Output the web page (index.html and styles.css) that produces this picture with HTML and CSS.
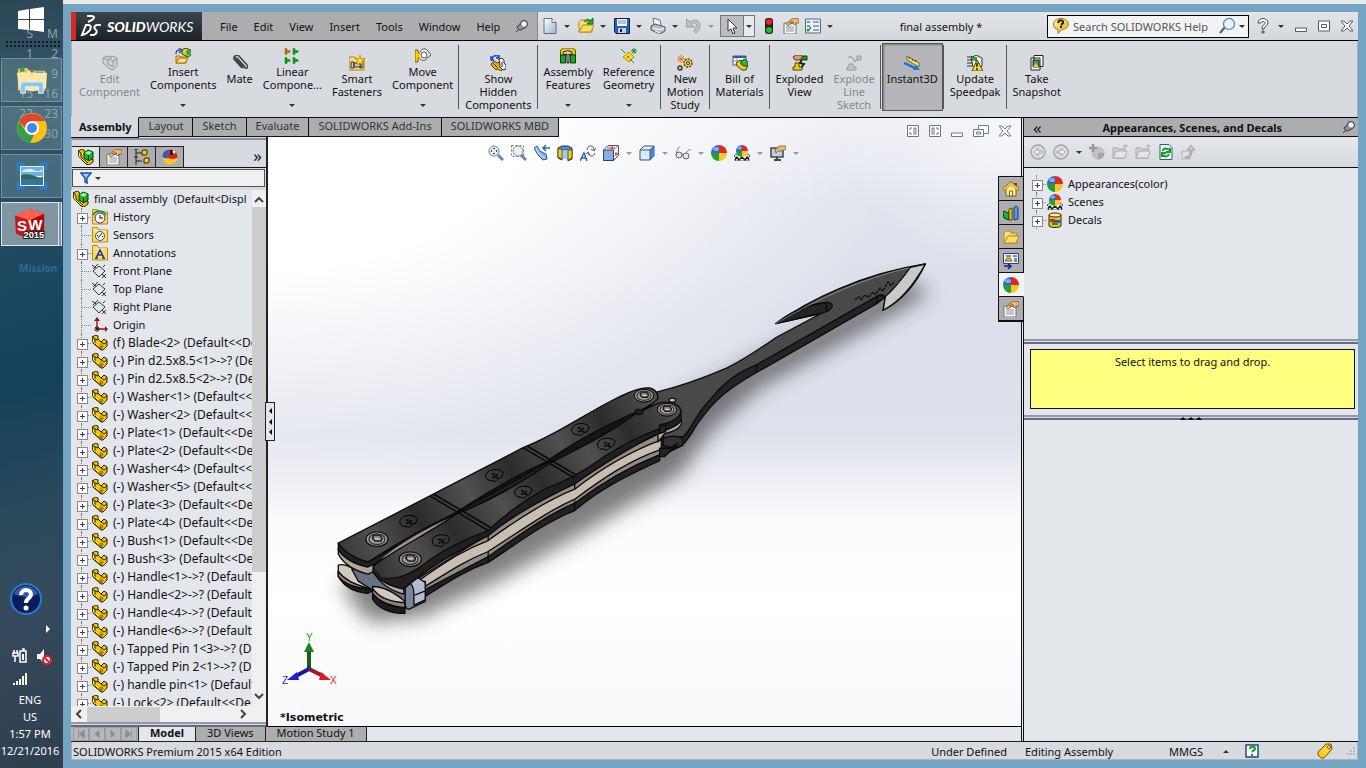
FILE: index.html
```html
<!DOCTYPE html>
<html lang="en">
<head>
    <meta charset="UTF-8">
    <meta name="viewport" content="width=device-width, initial-scale=1.0">
    <title>SOLIDWORKS - final assembly</title>
    <link rel="stylesheet" href="styles.css">
</head>
<body>
    <!-- shared icons -->
    <svg class="defs" aria-hidden="true">
        <defs>
            <linearGradient id="gold" x1="0" y1="0" x2="1" y2="1"><stop offset="0" stop-color="#fff3a8"/><stop offset="1" stop-color="#e8a820"/></linearGradient>
            <linearGradient id="steel" x1="0" y1="0" x2="1" y2="1"><stop offset="0" stop-color="#fff"/><stop offset="1" stop-color="#9fb4cc"/></linearGradient>
        </defs>
        <symbol id="part" viewBox="0 0 16 16"><path d="M0 2L4 0l2 1v3l3 3 3-3 3 2v5l-4 4-2 0-8-7z" fill="#f4c800" stroke="#221c00"/><path d="M0 2l3 2v5l7 5M9 7l3 2 3-2M6 5l-3-1" fill="none" stroke="#221c00"/><path d="M9 9l3 2-2 3-3-3z" fill="#b08400"/><path d="M1.500 4v3l6 5" fill="none" stroke="#ffef50"/></symbol>
        <symbol id="asm" viewBox="0 0 16 16"><path d="M0 2l4-2 2 1 1 6 4 3 4 0v3l-4 3-3-1-7-7z" fill="#f4c800" stroke="#221c00"/><path d="M0 2l3 2v4l7 6" fill="none" stroke="#221c00"/><path d="M1.500 4v4l6 5" fill="none" stroke="#ffef50"/><path d="M6 4l4-3 5 2v6l-4 3-5-3z" fill="#18b02c" stroke="#063a0c"/><path d="M7 4l3-2 4 1-3 3z" fill="#a8f4a8"/><path d="M10.500 6v5" stroke="#063a0c"/></symbol>
        <symbol id="asm-off" viewBox="0 0 16 16"><path d="M1 3l3-2 2 1 4-1 5 2v8l-4 4-3-1-7-6z" fill="#d0d2d5" stroke="#94969a"/><path d="M1 3l5 2v4l5 3V6l4-2M6 5l4-3M11 6L7 4" fill="none" stroke="#94969a"/></symbol>
        <symbol id="folder" viewBox="0 0 16 16"><path d="M1 14V4l2-2h4l1 2h6v10z" fill="url(#gold)" stroke="#b98a10"/><path d="M1 14l4-7h11l-3 7z" fill="#ffdd6c" stroke="#b98a10"/></symbol>
        <symbol id="fold-box" viewBox="0 0 16 16"><path d="M0.500 2V.5h5L7 3h8.500v12H.5z" fill="#ffdc60" stroke="#b98a10"/><path d="M1 4h13" stroke="#fff4b8"/></symbol>
        <symbol id="history" viewBox="0 0 16 16"><use href="#fold-box"/><circle cx="8" cy="9" r="5" fill="#fff" stroke="#2233aa"/><path d="M8 6v3h3" fill="none" stroke="#d02020" stroke-width="1.4"/><path d="M1 6c3-5 10-5 13 0" fill="none" stroke="#18992a" stroke-width="2"/></symbol>
        <symbol id="sensor" viewBox="0 0 16 16"><use href="#fold-box"/><circle cx="8" cy="9" r="4.500" fill="#eef4ff" stroke="#445577"/><path d="M6 11l4-5M5 8l1 1M11 10l-1-1" stroke="#223"/></symbol>
        <symbol id="annot" viewBox="0 0 16 16"><use href="#fold-box"/><path d="M4 13L8 5l4 8M5 10h6M3 13h3M10 13h3" fill="none" stroke="#1733b8" stroke-width="1.500"/></symbol>
        <symbol id="plane" viewBox="0 0 16 16"><path d="M7 3l6 5-6 6-6-6zM0 2l4 3M1 6l5-5M10 11l4 4M11 4l2-2M10 15l4-4" fill="none" stroke="#333"/></symbol>
        <symbol id="origin" viewBox="0 0 16 16"><path d="M5 1v11h9" fill="none" stroke="#a01010" stroke-width="1.400"/><path d="M5 0L2 4h6zM16 12l-3-3v6z" fill="#a01010"/><path d="M3 10l4 4M7 10l-4 4M5 9v6M2 12h6" stroke="#222"/></symbol>
        <symbol id="ball" viewBox="0 0 16 16"><path d="M8 8V0a8 8 0 0 0-8 8z" fill="#2868d8"/><path d="M8 8V0a8 8 0 0 1 8 8z" fill="#e02828"/><path d="M8 8H0a8 8 0 0 0 8 8z" fill="#20a030"/><path d="M8 8h8a8 8 0 0 1-8 8z" fill="#f8c828"/><ellipse cx="5" cy="4" rx="3" ry="2" fill="#fff" opacity=".45"/></symbol>
        <symbol id="redball" viewBox="0 0 16 16"><circle cx="8" cy="8" r="7.500" fill="#f4c828"/><path d="M.5 8Q0 1 8 .5 5 5 6 9 3 10 .5 8z" fill="#2858c8"/><path d="M8 .5q8 1 7.500 8Q12 11 6 9 5 4 8 .5z" fill="#d82020"/><path d="M8 1h3v5H8z" fill="#30141c"/><path d="M11 2l2 2" stroke="#fff" stroke-width="2"/></symbol>
        <symbol id="scene" viewBox="0 0 16 16"><path d="M0 11l3-2h10l3 2-2 2 1 3H1l1-3z" fill="#fff" stroke="#555"/><path d="M1 15l2-3 2 3 3-3 3 3 2-3 2 3" fill="none" stroke="#222" stroke-width="1.500"/><svg x="2" width="12" height="12" viewBox="0 0 16 16"><use href="#ball"/></svg></symbol>
        <symbol id="decal" viewBox="0 0 16 16"><path d="M2 3v11c2 2 10 2 12 0V3z" fill="#f0c020" stroke="#332600"/><ellipse cx="8" cy="3" rx="6" ry="2" fill="#fff0a0" stroke="#332600"/><path d="M3 7h5v3H3z" fill="#e02020"/><path d="M8 8h5v3H8z" fill="#2050e0"/><path d="M5 10h6v3H5z" fill="#20a030"/></symbol>
        <symbol id="props" viewBox="0 0 16 16"><path d="M1 5h12v11H1z" fill="#f6f7f8" stroke="#70757c"/><path d="M3 9h8M3 11h8M3 13h8" stroke="#8995a5"/><path d="M3 6l2 2 4-3 3 2 1-2h3V1l-6-1-5 4z" fill="#e8b77c" stroke="#7a4a1c" stroke-width=".7"/><path d="M6 4l3 2M8 3l3 2" stroke="#7a4a1c"/></symbol>
        <symbol id="config" viewBox="0 0 16 16"><path d="M2 0v16M2 4h6M2 12h6M0 0h4M0 8h4" fill="none" stroke="#222"/><path d="M9 1h4v4l-1 1H8V2zM11 9h4v4l-1 1h-4v-4z" fill="#f6cc10" stroke="#332600"/></symbol>
        <symbol id="funnel" viewBox="0 0 12 12"><path d="M1 1h10L7 6v5l-2-1V6z" fill="#9cd4ff" stroke="#1552b8" stroke-width="1.500"/></symbol>
        <symbol id="magnify" viewBox="0 0 16 16"><path d="M10 10l5 5" stroke="#5c8cc0" stroke-width="3"/><circle cx="6" cy="6" r="5" fill="#e6f1fa" stroke="#777c84"/><path d="M6 3v1M6 8v1M3 6h1M8 6h1" stroke="#444" stroke-width="2"/></symbol>
        <symbol id="magarea" viewBox="0 0 16 16"><path d="M10 10l5 5" stroke="#5c8cc0" stroke-width="3"/><circle cx="7" cy="6" r="5" fill="#e6f1fa" stroke="#8a9098"/><path d="M.5.500h12v11H.5z" fill="none" stroke="#777" stroke-dasharray="2 2"/></symbol>
        <symbol id="prev" viewBox="0 0 16 16"><path d="M0 3l3-2 3 5 6 3 1 5-4 1-5-5z" fill="#7ab4e8" stroke="#2c5f9c"/><path d="M2 3l3 6 6 4" fill="none" stroke="#dff0ff"/><path d="M16 3h-6M12 0L9 3l3 3" fill="none" stroke="#2868b8" stroke-width="1.500"/></symbol>
        <symbol id="section" viewBox="0 0 16 16"><path d="M1 3l4-2h6l4 2v11l-4 2V5H5v10l-4-2z" fill="#4b8fe0" stroke="#234"/><path d="M5 5h6v9H5z" fill="#9cc8f4"/><path d="M1 4h4v10l-4-2zM11 5h4v8l-4 2z" fill="#f4cf30" stroke="#765800"/></symbol>
        <symbol id="textrot" viewBox="0 0 16 16"><path d="M0 16l4-8 3 8M2 13h4" fill="none" stroke="#2b63b8" stroke-width="1.500"/><path d="M7 5c1-6 7-5 7 0M16 3l-2 3-3-2M15 8c-1 4-6 4-7 0M6 9l2-2 2 3" fill="none" stroke="#555"/></symbol>
        <symbol id="orient" viewBox="0 0 16 16"><path d="M5 .5h10.500v10l-5 5H.5V5z" fill="#fff" stroke="#555"/><path d="M.5 5h10v10.500H.5z" fill="#7fb2e8" stroke="#345"/><path d="M10.500 5l5-4.500M5 1v4" stroke="#888"/><path d="M6 3h6M9 1v4M13 7v4M12 9h3" stroke="#d02020"/></symbol>
        <symbol id="cube" viewBox="0 0 16 16"><path d="M1 5l4-4h10v10l-4 4H1z" fill="#dcecff" stroke="#456"/><path d="M11 5l4-4v10l-4 4z" fill="#4b87d8"/><path d="M1 5h10v10M11 5l4-4" fill="none" stroke="#456"/></symbol>
        <symbol id="glasses" viewBox="0 0 16 16"><path d="M1 10c1-5 2-8 4-8M11 8c2-3 4-4 5-3M7 9h1" fill="none" stroke="#777"/><circle cx="4" cy="10" r="3" fill="#d6e8f8" stroke="#666"/><circle cx="11" cy="11" r="3" fill="#d6e8f8" stroke="#666"/></symbol>
        <symbol id="monitor" viewBox="0 0 16 16"><path d="M1 3h12v9H1z" fill="#bcd0e4" stroke="#444" stroke-width="1.500"/><path d="M4 15h7M7 12v3" stroke="#444" stroke-width="2"/><path d="M5 5l4-4h7v3l-4 2-4 0-2 2z" fill="#e8b77c" stroke="#7a4a1c" stroke-width=".7"/></symbol>
        <symbol id="insert" viewBox="0 0 16 16"><path d="M1 6c0-4 2-4 4-4M4 0l3 2-3 3" fill="none" stroke="#1840c0" stroke-width="1.300"/><path d="M1 15V8h4l1 1h5v6z" fill="#ffc840" stroke="#a87000"/><path d="M1 15l3-5h9l-3 5z" fill="#ffe184" stroke="#a87000"/><path d="M7 2l3-2 6 2v5l-3 2-6-3z" fill="#e8d020" stroke="#333"/><path d="M11 3l4-2v5l-3 2z" fill="#20b030"/></symbol>
        <symbol id="clip" viewBox="0 0 16 16"><path d="M3 2L13 13c3 1 3-1 2-3L7 1C5-1 1 1 2 4l8 9M5 3l8 9M3 4l7 8M6 7l5 6" fill="none" stroke="#444" stroke-width="1.500"/></symbol>
        <symbol id="pattern" viewBox="0 0 16 16"><path d="M1.500 1v5h1V4h3V3h-3V1z" fill="#f2c500" stroke="#a07000" stroke-width="1.500"/><path d="M9.500 1v5h1V4h3V3h-3V1zM1.500 10v5h1v-2h3v-1h-3v-2zM9.500 10v5h1v-2h3v-1h-3v-2z" fill="#22d022" stroke="#089018" stroke-width="1.500"/></symbol>
        <symbol id="smart" viewBox="0 0 16 16"><path d="M0 2h6l1 2h9v11H0z" fill="#ffdc80" stroke="#b97c10"/><path d="M2 7h3v6H2zM5 8h7v4H5zM11 6h3v7h-3z" fill="#ccc" stroke="#333"/><path d="M11 0l1 4 4 0-3 2 1 4-3-2-3 2 1-4-3-2h4z" fill="#ffe820" stroke="#c07800" stroke-width=".6"/></symbol>
        <symbol id="move" viewBox="0 0 16 16"><path d="M0 2h3v3h3v5H3v4H0z" fill="#ffd000" stroke="#806000"/><path d="M5 4c2-4 6-4 8-1l3 4-4 3c-1 3-5 3-7 1" fill="#eceef0" stroke="#555"/><circle cx="9" cy="7" r="3" fill="#fff" stroke="#555"/></symbol>
        <symbol id="showhide" viewBox="0 0 16 16"><path d="M2 4c1-4 5-4 7-2M9 0v3H6M1 1v4h3" fill="none" stroke="#1840c0" stroke-width="1.400"/><path d="M1 9l3-3 3 2 3-1 2 4 2 2-3 3-3-2-2 1-4-4z" fill="#e8b010" stroke="#5c4300"/><path d="M9 4l3-1 2 2v3l2 2v4l-3 1-3-3z" fill="#e5e8ec" stroke="#333"/><path d="M3 8l5 5M12 7v5" stroke="#333"/></symbol>
        <symbol id="asmfeat" viewBox="0 0 16 16"><path d="M.5 2l3-2h9l3 2v5H.5z" fill="#f2d000" stroke="#665400"/><path d="M.5 7h5v8h-5zM10.500 7h5v8h-5z" fill="#20a828" stroke="#064010"/><path d="M3 4q5-3 9 0v3l-3-1v9H7V6L4 7z" fill="#ccc" stroke="#222"/></symbol>
        <symbol id="refgeo" viewBox="0 0 16 16"><path d="M8 4l5 5-5 5-6-5z" fill="#ffd820" stroke="#b88800"/><path d="M0 1l4 4M9 11l4 4M13 0v6M10 3h6M11 1l4 4M15 1l-4 4" stroke="#18902a"/><circle cx="7" cy="9" r="1" fill="#a05000"/></symbol>
        <symbol id="motion" viewBox="0 0 16 16"><circle cx="11" cy="8" r="4" fill="#ffd24a" stroke="#6a4800" stroke-width="1.600" stroke-dasharray="2 1"/><circle cx="3" cy="13" r="2" fill="#ffd24a" stroke="#333" stroke-width="1.400"/><circle cx="11" cy="8" r="1.500" fill="#fff" stroke="#222"/><path d="M4 0v8M0 4h8M1 1l6 6M7 1L1 7" stroke="#f07010"/></symbol>
        <symbol id="bom" viewBox="0 0 16 16"><path d="M1 1h13v9H1z" fill="#fff" stroke="#3458a8"/><path d="M1 2h13" stroke="#3458a8" stroke-width="2"/><path d="M1 6h12M5 3v7" stroke="#7890b8"/><path d="M4 8l4-3 8 5-2 5-4 0-5-4z" fill="#f0c818" stroke="#553c00"/><path d="M9 6l4-2 3 3v4l-4 0-3-2z" fill="#28b838" stroke="#08500f"/></symbol>
        <symbol id="explode" viewBox="0 0 16 16"><path d="M10 4l-2 4 4 1-3 4" fill="none" stroke="#222" stroke-width="2"/><path d="M1 2l3-2h6v3L7 5H3z" fill="#d8a060" stroke="#5c3410"/><path d="M11 1h4v4h-4z" fill="#20a830" stroke="#063a0c"/><path d="M3 8h4v4h3v3H1v-3h2z" fill="#f4cc10" stroke="#554000"/></symbol>
        <symbol id="explode-off" viewBox="0 0 16 16"><path d="M2 3l3-2 4 6 3-3M11 1h4v4h-4zM3 9h4v3h3v3H1v-3h2z" fill="#c4c6c9" stroke="#97999d"/></symbol>
        <symbol id="instant" viewBox="0 0 16 16"><path d="M3 1l12 7v4L3 5z" fill="#f4e468" stroke="#75691c"/><path d="M5 4l1-2M8 6l1-2M11 7l1-2" stroke="#333"/><path d="M0 8l11 5" stroke="#1878d8" stroke-width="2.500"/><path d="M9 15l7 0-4-5z" fill="#1878d8"/></symbol>
        <symbol id="speedpak" viewBox="0 0 16 16"><path d="M4 3l5-3 6 3v8l-4 4-5-3z" fill="#eee" stroke="#333"/><path d="M0 2h7M0 5h6M0 8h6M0 11h5M4 1l9 8" stroke="#333"/><path d="M5 2h5v5L5 5z" fill="#20a838"/><path d="M10 5l6 11H5z" fill="#ffe020" stroke="#514500"/><path d="M10 8v4M10 13v2" stroke="#111" stroke-width="1.500"/></symbol>
        <symbol id="snapshot" viewBox="0 0 16 16"><path d="M5 .5h9v11H5zM2 3h9v12H2z" fill="#fff" stroke="#222"/><path d="M4 5h6v7H4z" fill="#38a048" stroke="#222"/><path d="M4 12l3-4 3 4z" fill="#f0c030"/></symbol>
        <symbol id="doc" viewBox="0 0 16 16"><path d="M2 .5h8l4 4v11H2z" fill="url(#steel)" stroke="#58708c"/><path d="M10 .5v4h4" fill="#fff" stroke="#58708c"/></symbol>
        <symbol id="open" viewBox="0 0 16 16"><use href="#folder"/><path d="M6 4c2-4 5-3 7-1M15 0v6H9z" fill="#20b030" stroke="#087818"/></symbol>
        <symbol id="save" viewBox="0 0 16 16"><path d="M.5.500h15v15H2l-1.500-2z" fill="#1f5fc0" stroke="#123"/><path d="M3 1h10v7H3z" fill="#f4f8ff"/><path d="M4 3h8M4 5h8" stroke="#6a92c8"/><path d="M4 10h8v5H4z" fill="#c5d0dd"/><path d="M6 11h2v3H6z" fill="#123"/></symbol>
        <symbol id="print" viewBox="0 0 16 16"><path d="M3 0l7 2 1 6-7-1z" fill="#eaf4ff" stroke="#4e78a8"/><path d="M1 8l4-2 10 3v4l-5 3-9-4z" fill="#b9bdc2" stroke="#505458"/><path d="M3 10l7 2 4-2M5 13l5 2" fill="none" stroke="#fff"/></symbol>
        <symbol id="undo" viewBox="0 0 16 16"><path d="M.5 1v8h8L5 6c4-3 8 0 3 7l2 2C18 8 13-2 4 4z" fill="#c2c4c7" stroke="#9b9da0"/></symbol>
        <symbol id="cursor" viewBox="0 0 16 16"><path d="M4 1v12l3-2 2 5 2-1-2-5h4z" fill="#fff" stroke="#333"/></symbol>
        <symbol id="traffic" viewBox="0 0 16 16"><rect x="4" y="0" width="8" height="16" rx="3" fill="#222"/><circle cx="8" cy="4" r="3" fill="#f02020"/><circle cx="8" cy="12" r="3" fill="#20c020"/></symbol>
        <symbol id="list" viewBox="0 0 16 16"><path d="M.5 1h15v14H.5z" fill="#eaf1f7" stroke="#4a6a88"/><path d="M8 4h6M8 8h6M8 12h6" stroke="#557"/><path d="M2 3h3v2H2zM2 7h3v2H2z" fill="#7898b8"/><path d="M2 11l1 2 3-4" fill="none" stroke="#20a030" stroke-width="1.500"/></symbol>
        <symbol id="pin" viewBox="0 0 12 12"><path d="M0 12l4-4" stroke="#333"/><path d="M1 7c1-2 3-2 3-2 0-4 4-6 6-4s2 5-1 7L6 9c-1 2-4 1-5-2z" fill="#8e909c" stroke="#33343c"/><circle cx="8" cy="4" r="2.500" fill="#f4f4f8"/></symbol>
        <symbol id="bubble" viewBox="0 0 16 16"><path d="M8 .5c10 0 9 11 1 11l-4 4v-4C-2 10-1 .5 8 .5z" fill="url(#gold)" stroke="#b07800"/><path d="M5 5c1-4 6-3 5 0L8 7M8 8v2" fill="none" stroke="#222" stroke-width="2"/></symbol>
        <symbol id="glass" viewBox="0 0 16 16"><path d="M6 9l-5 6" stroke="#557" stroke-width="2"/><circle cx="10" cy="6" r="5.500" fill="#e6f4ff" stroke="#4c82b0" stroke-width="1.200"/></symbol>
        <symbol id="help" viewBox="0 0 16 16"><path d="M3 5c0-6 10-6 10 0 0 3-4 3-4 6H7c0-4 3-4 3-6s-4-2-4 0zM7 13h2v2H7z" fill="#fff" stroke="#444a58"/></symbol>
        <symbol id="min" viewBox="0 0 12 12"><path d="M.5 8h11v3.500H.5z" fill="#fff" stroke="#555a68"/></symbol>
        <symbol id="max" viewBox="0 0 12 12"><path d="M.5 1h11v10H.5zM3.500 4.500h5v3h-5z" fill="#fff" stroke="#555a68"/></symbol>
        <symbol id="close" viewBox="0 0 12 12"><path d="M0 1h3l3 3 3-3h3L8 6l4 5H9L6 8l-3 3H0l4-5z" fill="#fff" stroke="#555a68"/></symbol>
        <symbol id="cascade" viewBox="0 0 16 12"><path d="M5.500.500h10v8h-10z" fill="#fff" stroke="#555a68"/><path d="M.5 4.500h10v7H.5zM3.500 7h4v2h-4z" fill="#fff" stroke="#555a68"/></symbol>
        <symbol id="paneleft" viewBox="0 0 12 12"><path d="M.5.500h11v11H.5z" fill="#fff" stroke="#555a68"/><path d="M5 3H3v2M3 7v2h2M7 3h2v6H7z" fill="none" stroke="#555a68"/></symbol>
        <symbol id="house" viewBox="0 0 16 16"><path d="M11 2h3v5h-3z" fill="#c02020"/><path d="M3 8l5-5 5 5v7H3z" fill="#ffe890" stroke="#8a6000"/><path d="M0 9l8-7 8 7" fill="none" stroke="#b07c10" stroke-width="3"/><path d="M1 8.500l7-6 7 6" fill="none" stroke="#ffd84c" stroke-width="1.500"/><path d="M6.500 10h3v5h-3z" fill="#fff" stroke="#8a6000"/></symbol>
        <symbol id="library" viewBox="0 0 16 16"><path d="M0 7l2-1 2 2 2-1v8l-5-2z" fill="#20b030" stroke="#064010"/><path d="M6 4l3-1v12H6z" fill="#f0c818" stroke="#554000"/><path d="M11 3q2-4 4 0v11l-4 1z" fill="#5a98e8" stroke="#123866"/></symbol>
        <symbol id="palette" viewBox="0 0 16 16"><path d="M.5.500h15v10H.5z" fill="#eef3fa" stroke="#23457c"/><path d="M3 3h5M10 3h4M11 6h3M11 8h3" stroke="#456caa" stroke-width="1.500"/><path d="M2 8h7L7 5H4z" fill="#f0cc20" stroke="#7a6400"/><path d="M1 13h6M5 11l3 2-3 3" fill="none" stroke="#0818c8" stroke-width="1.500"/></symbol>
        <symbol id="back" viewBox="0 0 16 16"><circle cx="8" cy="8" r="7" fill="#dcdddf" stroke="#a4a6a9" stroke-width="1.500"/><path d="M12 7H8V4L4 8l4 4V9h4z" fill="#f4f4f4" stroke="#a4a6a9"/></symbol>
        <symbol id="fwd" viewBox="0 0 16 16"><circle cx="8" cy="8" r="7" fill="#dcdddf" stroke="#a4a6a9" stroke-width="1.500"/><path d="M4 7h4V4l4 4-4 4V9H4z" fill="#f4f4f4" stroke="#a4a6a9"/></symbol>
        <symbol id="addball" viewBox="0 0 16 16"><circle cx="9" cy="9" r="6.500" fill="#c0c2c4"/><path d="M9 9h6.500A6.500 6.500 0 0 1 9 15.500z" fill="#a2a4a7"/><path d="M4 0v8M0 4h8" stroke="#94969a" stroke-width="2.500"/></symbol>
        <symbol id="folder-off" viewBox="0 0 16 16"><path d="M1 14V4h5l1 1h6v9z" fill="#d0d2d4" stroke="#a8aaad"/><path d="M1 14l3-7h11l-2 7z" fill="#e4e5e7" stroke="#a8aaad"/><path d="M13 0v5M11 2h5" stroke="#a8aaad"/></symbol>
        <symbol id="refresh" viewBox="0 0 16 16"><path d="M2 .5h9l3 3v12H2z" fill="#eef6fc" stroke="#3c5a78"/><path d="M5 7c0-3 4-3 6-1M12 4v4H8M11 10c-1 3-4 3-6 1M4 13V9h4" fill="none" stroke="#10a020" stroke-width="2"/></symbol>
        <symbol id="up-off" viewBox="0 0 16 16"><path d="M1 15V7h8v8z" fill="#e0e1e3" stroke="#b0b2b5"/><path d="M4 13c5 0 5-3 5-7H6l4-5 4 5h-3c0 5-1 8-7 8z" fill="#c4c6c8" stroke="#a0a2a5"/></symbol>
        <symbol id="tag" viewBox="0 0 16 16"><path d="M1 9L9 1l5 0 1 5-8 9-3 0-3-3z" fill="#ffc820" stroke="#7a5000"/><circle cx="12" cy="4" r="1.500" fill="#fff" stroke="#7a5000"/><path d="M5 8l4 3M7 6l4 3" stroke="#fff2a0"/></symbol>
        <symbol id="qbox" viewBox="0 0 14 14"><path d="M1 1h12v12H1z" fill="#fff" stroke="#234a78" stroke-width="1.500"/><path d="M5 5c0-3 5-3 5 0L7 8M7 10v2" fill="none" stroke="#10a020" stroke-width="2"/></symbol>
    </svg>

    <aside class="taskbar">
        <table class="calendar" aria-hidden="true">
            <tr><td>S</td><td>M</td></tr>
            <tr><td>1</td><td>2</td></tr>
            <tr><td></td><td>9</td></tr>
            <tr><td>15</td><td>16</td></tr>
            <tr><td>22</td><td>23</td></tr>
            <tr><td></td><td>30</td></tr>
        </table>
        <button class="start" aria-label="Start"><svg viewBox="0 0 26 26"><path d="M0 4l11-2v10H0zM12 2l14-2v12H12zM0 13h11v10L0 22zM12 13h14v12l-14-2z" fill="#fff"/></svg></button>
        <div class="grip"></div>
        <button class="task" aria-label="File Explorer"><svg viewBox="0 0 32 28"><path d="M1 3l2-2h8l2 3h17v21H1z" fill="#e8c868"/><path d="M3 1h5v4H3z" fill="#38a838"/><path d="M12 4h6v3h-6z" fill="#fff"/><path d="M14 4h4v2h-4z" fill="#d04030"/><path d="M20 5h8v3h-8z" fill="#3890d8"/><path d="M0 6h32l-1 17-15 3L2 22z" fill="#fae9a4"/><path d="M4 28V18q0-2 2-2h20q2 0 2 2v10h-5v-7H9v7z" fill="#86c8ec" stroke="#d5f0ff"/></svg></button>
        <button class="task" aria-label="Chrome"><svg viewBox="0 0 30 30"><circle cx="15" cy="15" r="15" fill="#fbc116"/><path d="M2 8a15 15 0 0 1 26 0H15l-6 8z" fill="#e04435"/><path d="M2 8l7 11 8 3-4 8A15 15 0 0 1 2 8z" fill="#30a050"/><circle cx="15" cy="15" r="7" fill="#fff"/><circle cx="15" cy="15" r="5" fill="#4285f4"/></svg></button>
        <button class="task" aria-label="Pictures"><svg viewBox="0 0 30 26"><path d="M1 7V1h7M22 1h7v6M29 19v6h-7M8 25H1v-6" fill="none" stroke="#2b7dd0" stroke-width="3"/><path d="M3 3h24v20H3z" fill="#eef4f8"/><path d="M4 4h22v9H4z" fill="#69b2e4"/><path d="M5 8q6-4 12-1t8-1v3H5z" fill="#d8ecf8"/><path d="M4 12q7-2 14 1t8 0v5H4z" fill="#2f6a4c"/><path d="M4 16h22v6H4z" fill="#3674a8"/></svg></button>
        <button class="task active" aria-label="SOLIDWORKS 2015"><svg viewBox="0 0 32 32"><path d="M0 7L16 0l15 5v21L14 32 1 26z" fill="#c81818"/><path d="M0 7l16-7 15 5-15 7z" fill="#ff6050"/><path d="M16 12l15-7v21l-15 6z" fill="#a40c10"/><text x="2" y="23" class="sw-letter">S</text><text x="14" y="22" class="sw-letter">W</text><text x="9" y="31" class="sw-year">2015</text></svg></button>
        <span class="mission">Mission</span>
        <div class="tray">
            <svg class="orb" viewBox="0 0 32 32"><circle cx="16" cy="16" r="15" fill="#0a1c5c" stroke="#2080d0" stroke-width="2"/><path d="M4 11a13 13 0 0 1 24 0q-12 6-24 0z" fill="#3c58a0"/><path d="M11 12c0-7 11-6 10 0-1 4-5 3-5 8" fill="none" stroke="#fff" stroke-width="4"/><circle cx="16" cy="25" r="2.500" fill="#fff"/></svg>
            <svg class="more" viewBox="0 0 6 8"><path d="M1 0l4 4-4 4z" fill="#fff"/></svg>
            <div class="tray-icons">
                <svg width="16" height="14" viewBox="0 0 16 14"><path d="M8 2h6v11H8zM10 0h2v2M1 4h5v3H1zM2 1v3M5 1v3M3 7v6" fill="none" stroke="#fff" stroke-width="1.500"/><path d="M10 5h2v6h-2z" fill="#fff"/></svg>
                <svg width="16" height="16" viewBox="0 0 16 16"><path d="M1 5h3l4-5v14L4 10H1z" fill="#fff"/><circle cx="11" cy="11" r="4" fill="#fff" stroke="#e02020" stroke-width="2"/><path d="M8 8l6 6" stroke="#e02020" stroke-width="2"/></svg>
            </div>
            <svg class="signal" viewBox="0 0 16 12"><path d="M1 12v-2M4 12V8M7 12V6M10 12V3M13 12V0" stroke="#fff" stroke-width="2"/></svg>
            <p>ENG</p>
            <p>US</p>
            <p>1:57 PM</p>
            <p>12/21/2016</p>
        </div>
    </aside>

    <div class="desktop">
        <div class="window">
            <header class="titlebar">
                <h1 class="brand"><svg viewBox="0 0 20 20"><path d="M6 0h5q4 1 0 4L7 6M1 19L5 9h3q3 1 1 5-3 4-8 5zM20 9h-4q-4 1-2 4 4 3-1 6H9" fill="none" stroke="#fff" stroke-width="2"/></svg><span><b>SOLID</b>WORKS</span></h1>
                <nav class="menu">
                    <button>File</button><button>Edit</button><button>View</button><button>Insert</button><button>Tools</button><button>Window</button><button>Help</button>
                    <svg class="i12"><use href="#pin"/></svg>
                </nav>
                <div class="quick">
                    <button aria-label="New"><svg class="i16"><use href="#doc"/></svg></button><i class="caret"></i>
                    <button aria-label="Open"><svg class="i16"><use href="#open"/></svg></button><i class="caret"></i>
                    <button aria-label="Save"><svg class="i16"><use href="#save"/></svg></button><i class="caret"></i>
                    <button aria-label="Print"><svg class="i16"><use href="#print"/></svg></button><i class="caret"></i>
                    <button aria-label="Undo"><svg class="i16"><use href="#undo"/></svg></button><i class="caret dim"></i>
                    <button class="select-tool" aria-label="Select"><span><svg class="i16"><use href="#cursor"/></svg></span><i class="caret"></i></button>
                    <button aria-label="Rebuild"><svg class="i16"><use href="#traffic"/></svg></button>
                    <button aria-label="File properties"><svg class="i16"><use href="#props"/></svg></button>
                    <button aria-label="Options"><svg class="i16"><use href="#list"/></svg></button><i class="caret"></i>
                </div>
                <span class="doc-title">final assembly *</span>
                <label class="search"><svg class="i16"><use href="#bubble"/></svg><input type="text" placeholder="Search SOLIDWORKS Help" aria-label="Search SOLIDWORKS Help"><svg class="i16"><use href="#glass"/></svg><i class="caret"></i></label>
                <div class="win-buttons">
                    <button aria-label="Help"><svg class="i16"><use href="#help"/></svg></button><i class="caret"></i>
                    <button aria-label="Minimize"><svg class="i12"><use href="#min"/></svg></button>
                    <button aria-label="Maximize"><svg class="i12"><use href="#max"/></svg></button>
                    <button aria-label="Close"><svg class="i12"><use href="#close"/></svg></button>
                </div>
            </header>

            <div class="ribbon">
                <button class="tool" disabled><svg class="i16"><use href="#asm-off"/></svg><span>Edit<br>Component</span></button>
                <button class="tool drop"><svg class="i16"><use href="#insert"/></svg><span>Insert<br>Components</span><i class="caret"></i></button>
                <button class="tool"><svg class="i16"><use href="#clip"/></svg><span>Mate</span></button>
                <button class="tool drop"><svg class="i16"><use href="#pattern"/></svg><span>Linear<br>Compone...</span><i class="caret"></i></button>
                <button class="tool"><svg class="i16"><use href="#smart"/></svg><span>Smart<br>Fasteners</span></button>
                <button class="tool drop"><svg class="i16"><use href="#move"/></svg><span>Move<br>Component</span><i class="caret"></i></button>
                <span class="sep"></span>
                <button class="tool"><svg class="i16"><use href="#showhide"/></svg><span>Show<br>Hidden<br>Components</span></button>
                <span class="sep"></span>
                <button class="tool drop"><svg class="i16"><use href="#asmfeat"/></svg><span>Assembly<br>Features</span><i class="caret"></i></button>
                <button class="tool drop"><svg class="i16"><use href="#refgeo"/></svg><span>Reference<br>Geometry</span><i class="caret"></i></button>
                <span class="sep"></span>
                <button class="tool"><svg class="i16"><use href="#motion"/></svg><span>New<br>Motion<br>Study</span></button>
                <span class="sep"></span>
                <button class="tool"><svg class="i16"><use href="#bom"/></svg><span>Bill of<br>Materials</span></button>
                <span class="sep"></span>
                <button class="tool"><svg class="i16"><use href="#explode"/></svg><span>Exploded<br>View</span></button>
                <button class="tool" disabled><svg class="i16"><use href="#explode-off"/></svg><span>Explode<br>Line<br>Sketch</span></button>
                <span class="sep"></span>
                <button class="tool pressed"><svg class="i16"><use href="#instant"/></svg><span>Instant3D</span></button>
                <span class="sep"></span>
                <button class="tool"><svg class="i16"><use href="#speedpak"/></svg><span>Update<br>Speedpak</span></button>
                <span class="sep"></span>
                <button class="tool"><svg class="i16"><use href="#snapshot"/></svg><span>Take<br>Snapshot</span></button>
            </div>

            <div class="workspace">
                <div class="document">
                    <div class="cmd-tabs">
                        <button class="on">Assembly</button><button>Layout</button><button>Sketch</button><button>Evaluate</button><button>SOLIDWORKS Add-Ins</button><button>SOLIDWORKS MBD</button>
                    </div>
                    <div class="doc-body">
                        <section class="manager">
                            <div class="manager-tabs">
                                <button class="on" aria-label="Feature tree"><svg class="i16"><use href="#asm"/></svg></button>
                                <button aria-label="Properties"><svg class="i16"><use href="#props"/></svg></button>
                                <button aria-label="Configurations"><svg class="i16"><use href="#config"/></svg></button>
                                <button aria-label="Display"><svg class="i16"><use href="#redball"/></svg></button>
                                <span class="expand">»</span>
                            </div>
                            <label class="filter"><svg class="i12"><use href="#funnel"/></svg><i class="caret"></i><input type="text" aria-label="Filter"></label>
                            <div class="tree-wrap">
                                <ul class="tree">
                                    <li class="root"><svg class="i16"><use href="#asm"/></svg>final assembly&nbsp; (Default&lt;Displ</li>
                                    <li><b></b><svg class="i16"><use href="#history"/></svg>History</li>
                                    <li class="leaf"><b></b><svg class="i16"><use href="#sensor"/></svg>Sensors</li>
                                    <li><b></b><svg class="i16"><use href="#annot"/></svg>Annotations</li>
                                    <li class="leaf"><b></b><svg class="i16"><use href="#plane"/></svg>Front Plane</li>
                                    <li class="leaf"><b></b><svg class="i16"><use href="#plane"/></svg>Top Plane</li>
                                    <li class="leaf"><b></b><svg class="i16"><use href="#plane"/></svg>Right Plane</li>
                                    <li class="leaf"><b></b><svg class="i16"><use href="#origin"/></svg>Origin</li>
                                    <li class="comp"><b></b><svg class="i16"><use href="#part"/></svg>(f) Blade&lt;2&gt; (Default&lt;&lt;De</li>
                                    <li class="comp"><b></b><svg class="i16"><use href="#part"/></svg>(-) Pin d2.5x8.5&lt;1&gt;-&gt;? (De</li>
                                    <li class="comp"><b></b><svg class="i16"><use href="#part"/></svg>(-) Pin d2.5x8.5&lt;2&gt;-&gt;? (De</li>
                                    <li class="comp"><b></b><svg class="i16"><use href="#part"/></svg>(-) Washer&lt;1&gt; (Default&lt;&lt;</li>
                                    <li class="comp"><b></b><svg class="i16"><use href="#part"/></svg>(-) Washer&lt;2&gt; (Default&lt;&lt;</li>
                                    <li class="comp"><b></b><svg class="i16"><use href="#part"/></svg>(-) Plate&lt;1&gt; (Default&lt;&lt;De</li>
                                    <li class="comp"><b></b><svg class="i16"><use href="#part"/></svg>(-) Plate&lt;2&gt; (Default&lt;&lt;De</li>
                                    <li class="comp"><b></b><svg class="i16"><use href="#part"/></svg>(-) Washer&lt;4&gt; (Default&lt;&lt;</li>
                                    <li class="comp"><b></b><svg class="i16"><use href="#part"/></svg>(-) Washer&lt;5&gt; (Default&lt;&lt;</li>
                                    <li class="comp"><b></b><svg class="i16"><use href="#part"/></svg>(-) Plate&lt;3&gt; (Default&lt;&lt;De</li>
                                    <li class="comp"><b></b><svg class="i16"><use href="#part"/></svg>(-) Plate&lt;4&gt; (Default&lt;&lt;De</li>
                                    <li class="comp"><b></b><svg class="i16"><use href="#part"/></svg>(-) Bush&lt;1&gt; (Default&lt;&lt;De</li>
                                    <li class="comp"><b></b><svg class="i16"><use href="#part"/></svg>(-) Bush&lt;3&gt; (Default&lt;&lt;De</li>
                                    <li class="comp"><b></b><svg class="i16"><use href="#part"/></svg>(-) Handle&lt;1&gt;-&gt;? (Default</li>
                                    <li class="comp"><b></b><svg class="i16"><use href="#part"/></svg>(-) Handle&lt;2&gt;-&gt;? (Default</li>
                                    <li class="comp"><b></b><svg class="i16"><use href="#part"/></svg>(-) Handle&lt;4&gt;-&gt;? (Default</li>
                                    <li class="comp"><b></b><svg class="i16"><use href="#part"/></svg>(-) Handle&lt;6&gt;-&gt;? (Default</li>
                                    <li class="comp"><b></b><svg class="i16"><use href="#part"/></svg>(-) Tapped Pin 1&lt;3&gt;-&gt;? (D</li>
                                    <li class="comp"><b></b><svg class="i16"><use href="#part"/></svg>(-) Tapped Pin 2&lt;1&gt;-&gt;? (D</li>
                                    <li class="comp"><b></b><svg class="i16"><use href="#part"/></svg>(-) handle pin&lt;1&gt; (Default</li>
                                    <li class="comp"><b></b><svg class="i16"><use href="#part"/></svg>(-) Lock&lt;2&gt; (Default&lt;&lt;De</li>
                                </ul>
                                <div class="vscroll">
                                    <svg viewBox="0 0 8 5"><path d="M0 5l4-4 4 4" fill="none" stroke="#444" stroke-width="2"/></svg>
                                    <i></i>
                                    <svg viewBox="0 0 8 5"><path d="M0 0l4 4 4-4" fill="none" stroke="#444" stroke-width="2"/></svg>
                                </div>
                            </div>
                            <div class="hscroll">
                                <svg viewBox="0 0 5 8"><path d="M5 0L1 4l4 4" fill="none" stroke="#444" stroke-width="2"/></svg>
                                <i></i>
                                <svg viewBox="0 0 5 8"><path d="M0 0l4 4-4 4" fill="none" stroke="#444" stroke-width="2"/></svg>
                            </div>
                            <div class="splitter"></div>
                            <div class="flyout"><i></i><i></i><i></i></div>
                        </section>

                        <section class="viewport">
                            <svg class="model" viewBox="268 118 753 608">
                                <defs>
                                    <linearGradient id="shine" gradientUnits="userSpaceOnUse" x1="55" y1="500" x2="330" y2="353" spreadMethod="repeat"><stop offset="0" stop-color="#383838"/><stop offset=".35" stop-color="#505050"/><stop offset=".8" stop-color="#2c2c2c"/><stop offset="1" stop-color="#383838"/></linearGradient>
                                    <linearGradient id="shine2" gradientUnits="userSpaceOnUse" x1="205" y1="600" x2="465" y2="446" spreadMethod="repeat"><stop offset="0" stop-color="#383838"/><stop offset=".35" stop-color="#505050"/><stop offset=".8" stop-color="#2c2c2c"/><stop offset="1" stop-color="#383838"/></linearGradient>
                                    <filter id="soft" x="-20%" y="-40%" width="140%" height="180%"><feGaussianBlur stdDeviation="10"/></filter>
                                    <symbol id="screw" viewBox="-36 -24 72 48" overflow="visible"><ellipse rx="33" ry="22" fill="#a8a098" stroke="#111" stroke-width="4"/><ellipse rx="24" ry="16" fill="none" stroke="#333" stroke-width="4"/><path d="M-14-3l5-9h17l8 9-4 9h-18z" fill="#8a827a" stroke="#111" stroke-width="4"/><path d="M-6-1H8" stroke="#eee" stroke-width="3"/></symbol>
                                    <symbol id="skull" viewBox="-30 -22 60 44" overflow="visible"><path d="M-26 6q-3-20 22-24 28-2 30 12-2 14-16 16l-8 8-10-3q-14 1-18-9z" fill="none" stroke="#000" stroke-width="3"/><path d="M-8-4h10M0 5l10-9M4 6h8M-6 8l4-6" stroke="#000" stroke-width="4"/></symbol>
                                </defs>
                                <g filter="url(#soft)" opacity=".62">
                                    <path d="M340 585L368 622 420 618 500 580 585 532 680 475 712 430 760 388 905 308 930 292 905 280 680 400 400 560z" fill="#333"/>
                                </g>
                                <!-- blade -->
                                <g transform="translate(620 250) scale(.333)" stroke="#0b0b0b" stroke-width="4" stroke-linejoin="round">
                                    <path d="M110 450L340 365 780 132 797 142 770 162 410 368C300 430 270 470 230 525Q205 570 185 588L130 615 120 570z" fill="#242424"/>
                                    <path d="M468 221C560 155 720 72 917 42 890 100 850 150 790 181L797 140Q785 128 770 140L410 345C350 368 310 400 270 450 225 495 215 540 190 560L135 565 70 500 110 427C180 410 250 385 320 355 380 325 430 290 470 262L605 190z" fill="#494949"/>
                                    <path d="M468 221C520 180 570 162 625 157Q642 162 636 172 628 184 605 190z" fill="#242424"/>
                                    <path d="M468 221C560 165 720 85 872 53" fill="none" stroke="#aaa" stroke-width="2"/>
                                    <path d="M917 42l-45 10Q830 110 797 140l-7 41Q860 145 917 42z" fill="#c9c9c9"/>
                                    <path d="M772 138v22M620 160v22M410 345v22" fill="none"/>
                                    <path d="M706 150l12-10 5 9 14-15 8 9 16-17 6 8 14-20 8 10 16-28 8 10 10-8" fill="none" stroke="#151515" stroke-width="5" stroke-dasharray="9 3"/>
                                    <path d="M130 565q35-12 58 0v22q-30 12-58 0z" fill="#303030"/>
                                    <ellipse cx="157" cy="451" rx="10" ry="6" fill="#c8beb4"/>
                                </g>
                                <!-- handles -->
                                <g transform="translate(320 380) scale(.333)" stroke="#0b0b0b" stroke-width="4" stroke-linejoin="round">
                                    <path d="M300 600L1020 170V242C930 285 850 320 765 392 680 425 600 485 505 548 430 575 380 610 300 660z" fill="#222"/>
                                    <path d="M55 572q25 45 88 57l15-8v12l-15 8Q80 635 55 590z" fill="#1d1d1d"/>
                                    <path d="M55 556q15-6 45 10l65 46-22 14Q80 610 55 580z" fill="#d2c9be"/>
                                    <path d="M55 575q25 34 88 50v-14l15-6v14l-15 8Q80 622 55 590z" fill="#8d857c"/>
                                    <path d="M95 567l70 12 100 60v45l-90-42-60-38z" fill="#687284"/>
                                    <path d="M158 642q35 40 97 43v16q-70 0-97-43z" fill="#1d1d1d"/>
                                    <path d="M158 620q45 0 97 45v8q-70-5-97-45z" fill="#d2c9be"/>
                                    <path d="M158 626q27 40 97 43v15q-70-8-97-43z" fill="#8d857c"/>
                                    <path d="M280 605L505 464C590 400 680 345 765 308 850 245 930 200 1020 160V224C930 260 850 305 765 370 680 405 600 465 505 530L300 638z" fill="#918a82"/>
                                    <path d="M300 600C380 545 430 510 505 482 590 420 680 362 765 328 850 262 930 215 1025 180V208C930 240 850 295 765 358 680 395 600 455 505 515 430 545 380 580 312 622z" fill="#c8beb3"/>
                                    <path d="M505 460v22M765 300v28M505 516v30M765 362v28" fill="none"/>
                                    <path d="M256 625Q262 600 275 604L316 605v60l-50 24q-12 0-10-30z" fill="#7b859a"/><path d="M282 648q2-34-18-40 12-14 30-14l22 14v52l-34 16z" fill="#b4bdcf"/><path d="M284 646l31-12" fill="none"/>
                                    <path d="M55 505v18q25 45 90 60l15-8v-30z" fill="#b0a89d"/>
                                    <path d="M160 575q28 52 92 68v-25z" fill="#b0a89d"/>
                                    <path d="M1015 160l70-45v18q-10 20-50 28l-20 25z" fill="#b8afa5"/>
                                    <path d="M140 535L410 385 690 225 950 70 1014 78 690 280 430 430 175 570z" fill="#151515"/>
                                    <path d="M55 490v20q25 38 88 52l17-8 250-145L690 262v-18L145 546z" fill="#202020"/>
                                    <path d="M55 490L330 348 610 203C710 165 790 105 880 60L900 50Q960 20 990 24 1015 30 1015 55 1005 70 960 92 800 160 680 245 540 310 405 400 280 460 145 546 80 530 55 490z" fill="url(#shine)"/>
                                    <path d="M180 538Q270 465 405 406 390 422 200 532z" fill="#9c948a" stroke-width="2"/>
                                    <path d="M160 560v18q28 38 90 50 90-75 170-115 40-25 85-45Q590 395 765 312 910 210 1035 152q50-18 49-35V95z" fill="#202020"/>
                                    <path d="M160 560C220 510 330 460 410 402 520 360 600 310 690 250 790 200 870 160 950 100L1020 68Q1080 62 1084 95 1080 118 1035 132 1020 130 1020 146 930 180 850 232 765 295 680 325 590 372 505 452 400 490 330 540 250 605 190 595 160 560z" fill="url(#shine2)"/>
                                    <path d="M330 348l175 104M342 343l170 100M610 203l155 92M622 198l148 88" fill="none" stroke-width="5"/>
                                    <ellipse cx="958" cy="96" rx="12" ry="8" fill="#222"/>
                                    <path d="M1020 135h18v20l-18 6zM1020 205h30l25-15-40 40h-15z" fill="#222"/>
                                    <use href="#screw" x="135" y="454" width="72" height="48"/><use href="#screw" x="235" y="514" width="72" height="48"/>
                                    <use href="#screw" x="941" y="26" width="64" height="42"/><use href="#screw" x="1010" y="68" width="64" height="42"/>
                                    <use href="#skull" x="236" y="403" width="60" height="44"/><use href="#skull" x="333" y="461" width="60" height="44"/>
                                    <use href="#skull" x="494" y="265" width="60" height="44"/><use href="#skull" x="581" y="315" width="60" height="44"/>
                                    <use href="#skull" x="752" y="127" width="60" height="44"/><use href="#skull" x="830" y="171" width="60" height="44"/>
                                </g>
                            </svg>
                            <div class="view-bar">
                                <svg class="i16"><use href="#magnify"/></svg>
                                <svg class="i16"><use href="#magarea"/></svg>
                                <svg class="i16"><use href="#prev"/></svg>
                                <svg class="i16"><use href="#section"/></svg>
                                <svg class="i16"><use href="#textrot"/></svg>
                                <svg class="i16"><use href="#orient"/></svg><i class="caret dim"></i>
                                <svg class="i16"><use href="#cube"/></svg><i class="caret dim"></i>
                                <svg class="i16"><use href="#glasses"/></svg><i class="caret dim"></i>
                                <svg class="i16"><use href="#ball"/></svg>
                                <svg class="i16"><use href="#scene"/></svg><i class="caret dim"></i>
                                <svg class="i16"><use href="#monitor"/></svg><i class="caret dim"></i>
                            </div>
                            <div class="mdi">
                                <button aria-label="Left pane"><svg class="i12"><use href="#paneleft"/></svg></button>
                                <button class="flip" aria-label="Right pane"><svg class="i12"><use href="#paneleft"/></svg></button>
                                <button aria-label="Minimize view"><svg class="i12"><use href="#min"/></svg></button>
                                <button aria-label="Restore view"><svg width="16" height="12"><use href="#cascade"/></svg></button>
                                <button aria-label="Close view"><svg class="i12"><use href="#close"/></svg></button>
                            </div>
                            <div class="triad">
                                <svg viewBox="0 0 60 60">
                                    <path d="M29 36V18" stroke="#186018" stroke-width="4"/><path d="M29 9l-5 10h10z" fill="#208028"/>
                                    <path d="M29 36L14 44" stroke="#1818a0" stroke-width="4"/><path d="M7 47l10-8 2 8z" fill="#2020d0"/>
                                    <path d="M29 36l14 7" stroke="#a01818" stroke-width="4"/><path d="M51 47l-10-8-2 8z" fill="#d82020"/>
                                    <circle cx="29" cy="35" r="2" fill="#2020a0"/>
                                    <text x="26" y="8" fill="#18a018">Y</text><text x="2" y="51" fill="#2020f0">Z</text><text x="50" y="51" fill="#f02020">X</text>
                                </svg>
                                <span>*Isometric</span>
                            </div>
                        </section>
                    </div>
                    <div class="sheet-tabs">
                        <div class="sheet-nav">
                            <button aria-label="First"><svg viewBox="0 0 10 10"><path d="M2 0v10M9 0L3 5l6 5z" fill="#8a8c90" stroke="#8a8c90"/></svg></button><button aria-label="Previous"><svg viewBox="0 0 10 10"><path d="M8 0L2 5l6 5z" fill="#8a8c90"/></svg></button><button aria-label="Next"><svg viewBox="0 0 10 10"><path d="M2 0l6 5-6 5z" fill="#8a8c90"/></svg></button><button aria-label="Last"><svg viewBox="0 0 10 10"><path d="M8 0v10M1 0l6 5-6 5z" fill="#8a8c90" stroke="#8a8c90"/></svg></button>
                        </div>
                        <button class="sheet on">Model</button><button class="sheet">3D Views</button><button class="sheet">Motion Study 1</button>
                    </div>
                </div>

                <aside class="taskpane">
                    <div class="pane-tabs">
                        <button aria-label="Resources"><svg class="i16"><use href="#house"/></svg></button>
                        <button aria-label="Design library"><svg class="i16"><use href="#library"/></svg></button>
                        <button aria-label="File explorer"><svg class="i16"><use href="#folder"/></svg></button>
                        <button aria-label="View palette"><svg class="i16"><use href="#palette"/></svg></button>
                        <button class="on" aria-label="Appearances"><svg class="i16"><use href="#ball"/></svg></button>
                        <button aria-label="Custom properties"><svg class="i16"><use href="#props"/></svg></button>
                    </div>
                    <div class="pane-head"><span class="expand">«</span><h2>Appearances, Scenes, and Decals</h2><svg class="i12"><use href="#pin"/></svg></div>
                    <div class="pane-bar">
                        <svg class="i16"><use href="#back"/></svg>
                        <svg class="i16"><use href="#fwd"/></svg><i class="caret"></i>
                        <svg class="i16"><use href="#addball"/></svg>
                        <svg class="i16"><use href="#folder-off"/></svg>
                        <svg class="i16"><use href="#folder-off"/></svg>
                        <svg class="i16"><use href="#refresh"/></svg>
                        <svg class="i16"><use href="#up-off"/></svg>
                    </div>
                    <ul class="tree pane-tree">
                        <li><b></b><svg class="i16"><use href="#ball"/></svg>Appearances(color)</li>
                        <li><b></b><svg class="i16"><use href="#scene"/></svg>Scenes</li>
                        <li><b></b><svg class="i16"><use href="#decal"/></svg>Decals</li>
                    </ul>
                    <div class="splitter"></div>
                    <p class="hint">Select items to drag and drop.</p>
                    <div class="splitter"><i></i><i></i><i></i></div>
                </aside>
            </div>

            <footer class="status">
                <span>SOLIDWORKS Premium 2015 x64 Edition</span>
                <span class="state">Under Defined</span>
                <span class="mode">Editing Assembly</span>
                <span class="units">MMGS</span>
                <i class="caret up"></i>
                <svg class="qbox"><use href="#qbox"/></svg>
                <svg class="i16 tag"><use href="#tag"/></svg>
                <svg class="resize" viewBox="0 0 9 9"><path d="M6 0h2v2H6zM3 3h2v2H3zM6 3h2v2H6zM0 6h2v2H0zM3 6h2v2H3zM6 6h2v2H6z" fill="#b8babd"/></svg>
            </footer>
        </div>
    </div>
</body>
</html>
```

FILE: styles.css
```css
* {
    box-sizing: border-box;
}
body {
    margin: 0;
    display: flex;
    height: 100vh;
    overflow: hidden;
    font-family: "Noto Sans", "Open Sans", sans-serif;
    font-size: 11px;
    line-height: 13px;
    color: #111;
    background: #e8e8e8;
}
button, input {
    font: inherit;
    color: inherit;
    padding: 0;
    border: 0;
    background: none;
}
ul, p, h1, h2 {
    margin: 0;
    padding: 0;
    list-style: none;
}
svg {
    display: block;
    flex: none;
    overflow: visible;
}
.defs {
    position: absolute;
    width: 0;
    height: 0;
}
.i16 {
    width: 16px;
    height: 16px;
}
.i12 {
    width: 12px;
    height: 12px;
}
.caret {
    flex: none;
    border: 3px solid transparent;
    border-top-color: #333;
    border-bottom: 0;
}
.caret.dim {
    border-top-color: #999;
}
.caret.up {
    border-top: 0;
    border-bottom: 3px solid #333;
}

/* windows taskbar */
.taskbar {
    position: relative;
    flex: none;
    width: 63px;
    display: flex;
    flex-direction: column;
    background: linear-gradient(165deg, #2c4655 0%, #35586b 14%, #1f4a62 32%, #15405a 50%, #2a4a5c 66%, #35495c 80%, #2f3f50 100%);
    color: #fff;
}
.calendar {
    position: absolute;
    top: 23px;
    left: 8px;
    border-spacing: 0;
    color: #8ea3ae;
    font-size: 12px;
}
.calendar td {
    width: 25px;
    height: 20px;
    padding: 0;
    text-align: right;
}
.start {
    position: relative;
    width: 26px;
    height: 26px;
    margin: 7px 0 7px 18px;
}
.grip {
    height: 8px;
    margin: 0 3px 10px 5px;
    background: radial-gradient(circle, #101c24 1px, transparent 1px) 0 0 / 4px 4px;
}
.task {
    position: relative;
    display: flex;
    align-items: center;
    justify-content: center;
    width: 61px;
    height: 44px;
    margin: 0 0 4px 1px;
    border: 1px solid #7a919c;
    background: rgba(140, 170, 180, 0.3);
}
.task svg {
    width: 30px;
}
.task.active {
    border-color: #e0e5e8;
    border-right-width: 4px;
    border-right-style: double;
    background: rgba(190, 200, 205, 0.6);
}
.sw-letter {
    font: bold 16px "Liberation Sans", sans-serif;
    fill: #fff;
}
.sw-year {
    font: bold 10px "Liberation Sans", sans-serif;
    fill: #fff;
    stroke: #222;
    stroke-width: 2px;
    paint-order: stroke;
}
.mission {
    margin: 12px 0 0 19px;
    font-weight: bold;
    font-size: 10px;
    color: #286a98;
}
.tray {
    display: flex;
    flex-direction: column;
    align-items: center;
    margin-top: auto;
    padding: 0 3px 9px 0;
    line-height: 17px;
}
.orb {
    width: 32px;
    height: 32px;
    margin-right: 8px;
}
.more {
    width: 6px;
    height: 8px;
    margin: 10px 0 16px 36px;
}
.tray-icons {
    display: flex;
    gap: 8px;
    margin-left: 4px;
}
.signal {
    width: 16px;
    height: 12px;
    margin: 8px 18px 6px 0;
}

/* application window */
.desktop {
    flex: 1;
    min-width: 0;
    display: flex;
    padding-top: 4px;
}
.window {
    flex: 1;
    min-width: 0;
    display: flex;
    flex-direction: column;
    border: 8px solid #74a4c2;
    background: #d7dadf;
    box-shadow: inset 0 0 0 1px #aab2ba;
}
.titlebar {
    display: flex;
    align-items: center;
    height: 29px;
    border-bottom: 1px solid #000;
    background: linear-gradient(#e2e4e8, #d4d7db);
}
.brand {
    align-self: stretch;
    display: flex;
    align-items: center;
    gap: 6px;
    width: 131px;
    padding-left: 5px;
    border-left: 5px solid #da291c;
    background: linear-gradient(#39454d, #1c2328);
    font: italic 14px "Lato", sans-serif;
    color: #fff;
}
.brand svg {
    width: 20px;
    height: 20px;
}
.brand b {
    font-weight: 900;
}
.menu {
    align-self: stretch;
    display: flex;
    align-items: center;
    gap: 16px;
    width: 336px;
    padding-left: 18px;
    border-right: 1px solid #888;
    background: #adadb0;
}
.quick, .win-buttons {
    display: flex;
    align-items: center;
    gap: 6px;
}
.quick {
    padding-left: 4px;
}
.quick > .caret {
    margin-right: 2px;
}
.quick > .caret.dim {
    margin-right: 0;
}
.select-tool {
    display: flex;
    align-items: center;
    height: 22px;
    border: 1px solid #777;
    background: #e8eaec;
}
.select-tool span {
    padding: 2px 3px;
    border-right: 1px solid #777;
    background: #b9bcc0;
}
.select-tool .caret {
    margin: 0 2px;
}
.doc-title {
    flex: 1;
    text-align: center;
}
.search {
    display: flex;
    align-items: center;
    gap: 4px;
    width: 202px;
    height: 23px;
    padding: 0 3px 0 5px;
    border: 1px solid #000;
    background: #f2f3f5;
}
.search input {
    flex: 1;
    min-width: 0;
    outline: 0;
}
.search input::placeholder {
    color: #555;
}
.win-buttons {
    gap: 11px;
    padding: 0 5px 0 6px;
}
.win-buttons .caret {
    margin-left: -4px;
}

.ribbon {
    display: flex;
    height: 77px;
    padding: 2px 3px 6px;
    border-bottom: 1px solid #000;
}
.tool {
    display: flex;
    flex-direction: column;
    align-items: center;
    padding: 12px 5px 0;
    text-align: center;
    white-space: nowrap;
}
.tool .i16 {
    margin-bottom: 1px;
}
.tool.drop {
    padding-top: 5px;
}
.tool .caret {
    margin: auto 0 4px;
}
.tool:disabled {
    color: #85878b;
}
.tool.pressed {
    padding: 11px 4px 0;
    border: 1px solid #555;
    background: #b4b6ba;
    box-shadow: inset 1px 1px 2px #777;
}
.sep {
    width: 1px;
    margin: 2px 1px 2px 0;
    background: #555;
}

.workspace {
    flex: 1;
    min-height: 0;
    display: flex;
}
.document {
    position: relative;
    flex: 1;
    min-width: 0;
    display: flex;
    flex-direction: column;
}
.cmd-tabs {
    position: absolute;
    z-index: 2;
    top: -1px;
    left: 0;
    display: flex;
}
.cmd-tabs button {
    height: 20px;
    padding: 0 9px 3px;
    border: 1px solid #111;
    border-left: 0;
    background: #adadb0;
    color: #333;
}
.cmd-tabs .on {
    height: 21px;
    padding: 0 7px 3px 8px;
    border-top-color: #d7dadf;
    background: #d7dadf;
    font-weight: bold;
    color: #111;
}
.doc-body {
    flex: 1;
    min-height: 0;
    display: flex;
}
.manager {
    position: relative;
    width: 197px;
    display: flex;
    flex-direction: column;
    padding-top: 20px;
    border-right: 2px solid #222;
}
.manager-tabs {
    display: flex;
    margin: 0 0 1px 1px;
    padding-top: 6px;
    border-top: 2px solid #8c8ea8;
    border-bottom: 1px solid #111;
}
.manager-tabs button {
    display: flex;
    justify-content: center;
    align-items: center;
    width: 28px;
    height: 21px;
    border: 1px solid #222;
    border-width: 1px 1px 0 0;
    background: #adadb0;
}
.manager-tabs .on {
    background: #e0e3e7;
}
.expand {
    margin: 3px 4px 0 auto;
    font-size: 17px;
    line-height: 13px;
}
.filter {
    display: flex;
    align-items: center;
    gap: 3px;
    height: 18px;
    margin: 0 1px 3px;
    padding-left: 7px;
    border: 1px solid #555;
    background: #f0f0f0;
}
.filter input {
    flex: 1;
    min-width: 0;
    outline: 0;
}
.tree-wrap {
    flex: 1;
    min-height: 0;
    display: flex;
    background: #e3e6eb;
}
.tree {
    flex: 1;
    min-width: 0;
    overflow: hidden;
    line-height: 18px;
    white-space: nowrap;
}
.tree li {
    position: relative;
    display: flex;
    align-items: center;
    height: 18px;
    padding-left: 21px;
}
.tree li svg {
    margin-right: 5px;
}
.tree .root {
    padding-left: 2px;
}
.tree .comp {
    font-size: 12px;
}
/* dotted branch lines and the expand box */
.tree b {
    position: absolute;
    top: 0;
    left: 10px;
    width: 11px;
    height: 18px;
    border-left: 1px dotted #777;
    background: linear-gradient(90deg, #888 50%, transparent 50%) 0 9px / 2px 1px repeat-x;
}
.tree b::after {
    content: "";
    position: absolute;
    top: 5px;
    left: -5px;
    width: 9px;
    height: 9px;
    border: 1px solid #888;
    background:
        linear-gradient(#2040a0, #2040a0) center / 5px 1px no-repeat,
        linear-gradient(#2040a0, #2040a0) center / 1px 5px no-repeat,
        #fff;
}
.tree .leaf b::after {
    content: none;
}
.vscroll {
    display: flex;
    flex-direction: column;
    align-items: center;
    justify-content: space-between;
    width: 14px;
    padding: 7px 0;
    background: #f0f0f0;
}
.vscroll svg {
    width: 8px;
    height: 5px;
}
.vscroll i {
    width: 14px;
    height: 365px;
    margin: 5px 0 auto;
    background: #cdcdcd;
}
.hscroll {
    display: flex;
    align-items: center;
    height: 16px;
    padding: 0 20px 0 5px;
    background: #f0f0f0;
}
.hscroll svg {
    width: 5px;
    height: 8px;
}
.hscroll i {
    width: 73px;
    height: 15px;
    margin: 0 auto 0 6px;
    background: #cdcdcd;
}
.splitter {
    display: flex;
    justify-content: center;
    gap: 2px;
    height: 5px;
    border-top: 2px solid #9498ae;
    border-bottom: 2px solid #666c80;
    background: #d7dadf;
}
.splitter i {
    border: 3px solid transparent;
    border-top: 0;
    border-bottom-color: #000;
}
.flyout {
    position: absolute;
    z-index: 2;
    top: 284px;
    right: -9px;
    width: 10px;
    height: 39px;
    display: flex;
    flex-direction: column;
    align-items: center;
    justify-content: space-evenly;
    border: 1px solid #222;
    background: #e3e6eb;
}
.flyout i {
    border: 3px solid transparent;
    border-left: 0;
    border-right-color: #000;
}

.viewport {
    position: relative;
    flex: 1;
    min-width: 0;
    border-bottom: 1px solid #000;
    background:
        radial-gradient(ellipse 85% 62% at 0 0, #fff 40%, rgba(255, 255, 255, 0) 100%),
        radial-gradient(ellipse 25% 25% at 100% 0, #f6f7fa 0%, rgba(246, 247, 250, 0) 100%),
        linear-gradient(180deg, #eceef4 0%, #e0e3ed 14%, #dcdfea 32%, #dee1eb 52%, #eff0f5 60%, #fbfbfc 66%, #fff 80%, #f8f8fb 100%);
}
.model {
    width: 100%;
    height: 100%;
}
.view-bar {
    position: absolute;
    top: 27px;
    left: 0;
    right: 3px;
    display: flex;
    align-items: center;
    justify-content: center;
    gap: 7px;
}
.mdi {
    position: absolute;
    top: 7px;
    right: 10px;
    display: flex;
    gap: 10px;
    opacity: 0.8;
}
.flip {
    transform: scaleX(-1);
}
.triad {
    position: absolute;
    left: 12px;
    bottom: 2px;
    font: bold 11px "DejaVu Sans", sans-serif;
}
.triad svg {
    width: 60px;
    height: 60px;
    margin-bottom: 18px;
}
.triad text {
    font: 10px "Liberation Sans", sans-serif;
}

.sheet-tabs {
    display: flex;
    height: 15px;
    background: #e3e6ea;
    border-bottom: 1px solid #222;
}
.sheet-nav {
    display: flex;
    width: 68px;
    padding-left: 2px;
    border-right: 1px solid #222;
    background: #b5b7ba;
}
.sheet-nav button {
    width: 16px;
    border: 1px solid #999ba0;
}
.sheet-nav svg {
    width: 8px;
    margin: auto;
}
.sheet {
    padding: 0 11px 2px;
    border-right: 1px solid #222;
    background: #adadb0;
    line-height: 12px;
}
.sheet.on {
    background: #e3e6ea;
    font-weight: bold;
}

.taskpane {
    position: relative;
    width: 337px;
    border-left: 3px double #111;
    border-bottom: 1px solid #111;
    background: #e3e6eb;
}
.pane-tabs {
    position: absolute;
    top: 58px;
    left: -26px;
    width: 26px;
    border: 1px solid #111;
    border-right: 0;
}
.pane-tabs button {
    display: flex;
    align-items: center;
    justify-content: center;
    width: 25px;
    height: 24px;
    border-bottom: 1px solid #111;
    border-right: 1px solid #111;
    background: #adadb0;
}
.pane-tabs .on {
    border-right-color: #f2f3f6;
    background: #f2f3f6;
}
.pane-head {
    display: flex;
    align-items: center;
    height: 19px;
    padding: 0 3px 0 9px;
    border-bottom: 1px solid #111;
    background: #adadb0;
}
.pane-head .expand {
    margin: 0;
}
.pane-head h2 {
    flex: 1;
    text-align: center;
    font-size: 11px;
}
.pane-bar {
    display: flex;
    align-items: center;
    gap: 7px;
    height: 31px;
    padding-left: 6px;
    border-bottom: 1px solid #111;
    background: linear-gradient(#e6e8ec, #d5d8dc);
}
.pane-tree {
    height: 171px;
    padding: 7px 0 0 2px;
}
.hint {
    height: 60px;
    margin: 5px 3px 6px 6px;
    padding-top: 3px;
    border: 1px solid #111;
    background: #ffff80;
    line-height: 17px;
    text-align: center;
}

.status {
    display: flex;
    align-items: center;
    height: 18px;
    padding: 0 2px;
}
.state {
    margin-left: auto;
}
.mode {
    width: 144px;
    margin-left: 18px;
}
.units {
    width: 54px;
}
.qbox {
    width: 14px;
    height: 14px;
    margin: 0 58px 0 16px;
}
.tag {
    margin-right: 14px;
}
.resize {
    width: 9px;
    height: 9px;
}
```
